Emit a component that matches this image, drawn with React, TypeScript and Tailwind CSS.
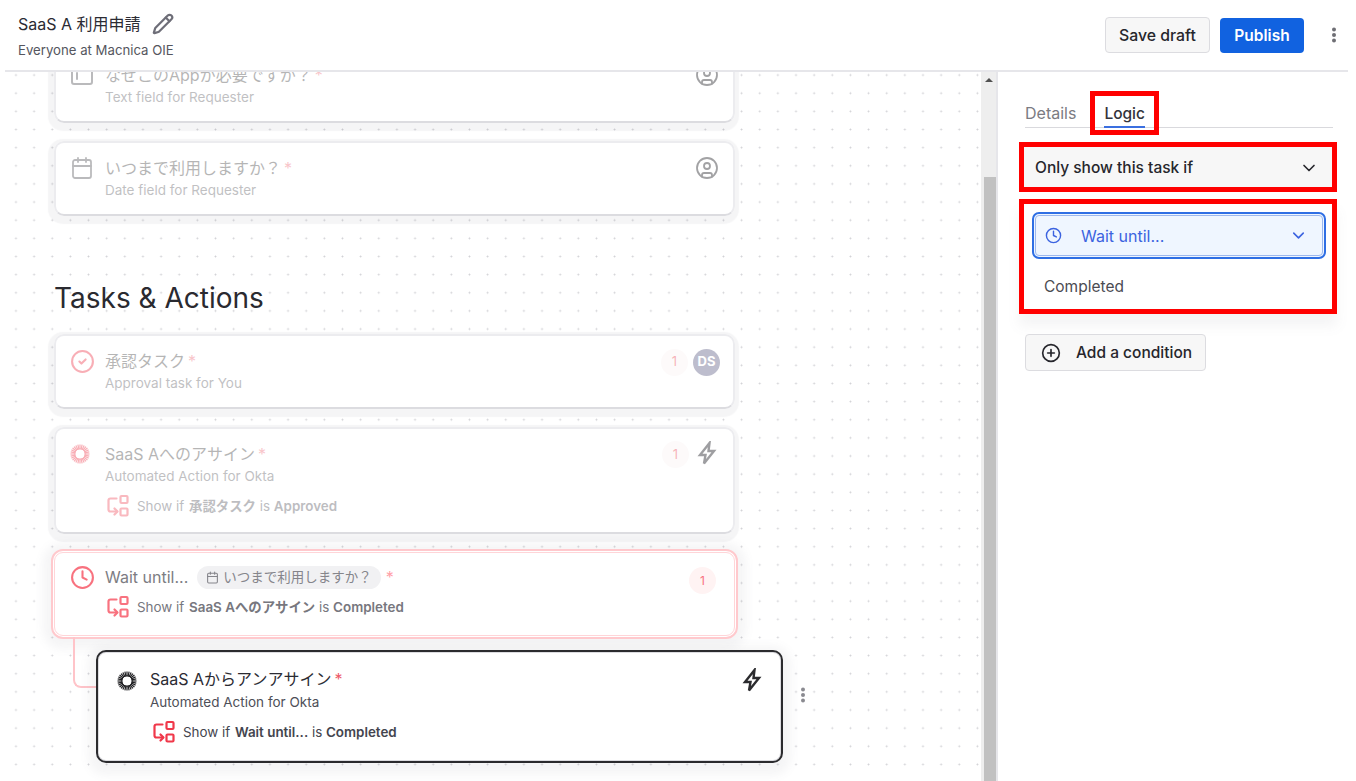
import { Calendar, ChevronDown, CircleCheck, CirclePlus, CircleUser, Clock, Pencil } from "lucide-react";

const font = "font-['Inter','Noto_Sans_CJK_JP',sans-serif]";

const Dots = ({ className }: { className?: string }) => (
  <svg viewBox="0 0 4 16" width="4" height="16" className={className} fill="currentColor">
    <circle cx="2" cy="2.4" r="2" />
    <circle cx="2" cy="8" r="2" />
    <circle cx="2" cy="13.6" r="2" />
  </svg>
);

const OktaIcon = ({ className }: { className?: string }) => {
  const rays = Array.from({ length: 28 }, (_, i) => (i * 360) / 28);
  return (
    <svg viewBox="0 0 20 20" width="20" height="20" className={className} stroke="currentColor" fill="none">
      <circle cx="10" cy="10" r="5.2" strokeWidth="1" />
      {rays.map((r) => (
        <line key={r} x1="10" y1="0.5" x2="10" y2="5.2" strokeWidth="1.2" transform={`rotate(${r} 10 10)`} />
      ))}
    </svg>
  );
};

const BoltIcon = ({ className }: { className?: string }) => (
  <svg viewBox="0 0 20 24" width="20" height="24" className={className} fill="none" stroke="currentColor" strokeWidth="2.4" strokeLinejoin="miter">
    <path d="M12.5 2 3 14H8.5L7 22.5 17 10H11.5Z" />
  </svg>
);

const LogicIcon = ({ className }: { className?: string }) => (
  <svg viewBox="0 0 22 24" width="22" height="24" className={className} fill="none" stroke="currentColor" strokeWidth="2.2" strokeLinecap="round" strokeLinejoin="round">
    <rect x="13.5" y="2" width="7" height="7" rx="1" />
    <rect x="13.5" y="14.5" width="7" height="7" rx="1" />
    <path d="M9.5 4.5H3.5a2 2 0 0 0-2 2v9a2 2 0 0 0 2 2H10" />
    <path d="M7.5 14.5 10.5 17.5 7.5 20.5" />
  </svg>
);

const TextFieldIcon = ({ className }: { className?: string }) => (
  <svg viewBox="0 0 24 24" width="24" height="24" className={className} fill="none" stroke="currentColor" strokeWidth="2" strokeLinecap="round">
    <rect x="2" y="3" width="20" height="18" rx="2" />
    <path d="M7 10v6" />
  </svg>
);

const Star = () => <span className="text-[#ed5a68] ml-[3px]">*</span>;

const Count = () => (
  <span className="w-[27px] h-[27px] rounded-full bg-[#fbf6f6] text-[13px] text-[#ed5a68] flex items-center justify-center">1</span>
);

const Card = ({ icon, title, sub, right, logic, height }: { icon: React.ReactNode; title: React.ReactNode; sub?: string; right?: React.ReactNode; logic?: React.ReactNode; height: string }) => (
  <div className="w-fit rounded-[10px] shadow-[-1px_3px_1px_5px_rgba(120,120,130,0.07)]">
    <div className={`w-[681px] ${height} bg-white rounded-[10px] border-2 border-[#ececef] border-b-[#dcdce0] flex pl-[14px] pr-[14px] pt-[13px]`}>
      <div className="w-[35px] shrink-0 opacity-40">{icon}</div>
      <div className="flex-1 min-w-0 opacity-35">
        <div className="text-[16px] leading-[24px] text-[#2f2f2f]">{title}</div>
        {sub && <div className="text-[13.5px] leading-[20px] text-[#4e4e54]">{sub}</div>}
        {logic}
      </div>
      <div className="opacity-45">{right}</div>
    </div>
  </div>
);

const Logic = ({ name, state, iconClass, textClass, top }: { name: string; state: string; iconClass: string; textClass: string; top: string }) => (
  <div className={`flex items-center gap-[8px] ${top} ml-[2px] text-[13.4px] leading-[24px] ${textClass}`}>
    <LogicIcon className={iconClass} />
    <span>Show if <b className="font-semibold ml-[1px]">{name}</b> is <b className="font-semibold">{state}</b></span>
  </div>
);

export default function App() {
  return (
    <div className={`w-[1356px] h-[781px] overflow-hidden bg-white flex flex-col ${font}`}>
      <header className="h-[72px] shrink-0 ml-[5px] mr-[8px] flex items-center border-b-2 border-[#e6e6ea] pl-[13px] pr-[12px]">
        <div className="flex-1">
          <div className="flex items-center gap-[11px] text-[16px] leading-[24px] text-[#2b2b33]">
            <span>SaaS A 利用申請</span>
            <Pencil size={22} strokeWidth={2.4} className="text-[#6e6e78]" />
          </div>
          <div className="text-[13.2px] leading-[18px] mt-[5px] text-[#55565e]">Everyone at Macnica OIE</div>
        </div>
        <button className="h-[36px] w-[105px] pt-[1px] rounded-[4px] border border-[#dcdce0] bg-[#f7f7f7] text-[15.8px] font-medium text-[#26262c] mr-[10px]">Save draft</button>
        <button className="h-[35px] w-[84px] pt-[1px] rounded-[4px] bg-[#1162e0] text-[15.5px] font-semibold text-white mr-[28px]">Publish</button>
        <Dots className="text-[#6e6e74]" />
      </header>
      <div className="flex-1 flex min-h-0">
        <main className="ml-[5px] w-[976px] shrink-0 overflow-hidden pl-[49px] bg-white bg-[radial-gradient(circle,#d0d0d4_0.8px,transparent_1.1px)] bg-[length:18.15px_18.15px] bg-[position:1.9px_-6px]">
          <div className="-mt-[24px] flex flex-col">
            <Card height="h-[75px]" icon={<TextFieldIcon className="text-[#55555a]" />} title={<>なぜこのAppが必要ですか？<Star /></>} sub="Text field for Requester" right={<CircleUser size={24} strokeWidth={1.8} className="text-[#333338]" />} />
            <div className="h-[18px]" />
            <Card height="h-[75px]" icon={<Calendar size={24} strokeWidth={1.8} className="text-[#55555a]" />} title={<>いつまで利用しますか？<Star /></>} sub="Date field for Requester" right={<CircleUser size={24} strokeWidth={1.8} className="text-[#333338]" />} />
            <h2 className="text-[28px] leading-[36px] text-[#2a2a30] mt-[64px] mb-[18px]">Tasks &amp; Actions</h2>
            <Card height="h-[75px]" icon={<CircleCheck size={25} strokeWidth={2} className="text-[#f0384a]" />} title={<>承認タスク<Star /></>} sub="Approval task for You" right={
              <div className="flex items-center gap-[5px] h-[26px] -mr-[1px]">
                <Count />
                <span className="w-[27px] h-[27px] rounded-full bg-[#6f6f92] text-white text-[13px] font-bold flex items-center justify-center">DS</span>
              </div>
            } />
            <div className="h-[18px]" />
            <Card height="h-[107px]" icon={<OktaIcon className="text-[#f0384a] mt-[2px]" />} title={<>SaaS Aへのアサイン<Star /></>} sub="Automated Action for Okta" logic={<Logic top="mt-[8px]" name="承認タスク" state="Approved" iconClass="text-[#f0384a]" textClass="text-[#44454e]" />} right={
              <div className="flex items-start gap-[8px]">
                <span className="block -mt-[1px]"><Count /></span>
                <BoltIcon className="text-[#2b2b30] -mt-[1px] mr-[2px]" />
              </div>
            } />
            <div className="h-[15px]" />
            <div className="w-[687px] -ml-[3px] h-[90px] rounded-[12px] border-2 border-[#ffc9cd] bg-white p-[1px] shadow-[0_2px_10px_8px_rgba(120,120,130,0.07)]">
              <div className="relative h-full rounded-[9px] border border-[#ffd5d8] flex pl-[15px] pr-[18px] pt-[12px]">
                <Clock size={25} strokeWidth={2} className="text-[#f8727f] mr-[10px]" />
                <div className="flex-1">
                  <div className="flex items-center text-[16px] leading-[24px] text-[#7d7d83]">
                    <span>Wait until...</span>
                    <span className="ml-[9px] h-[23px] px-[9px] rounded-full bg-[#f1f1f3] flex items-center gap-[4px] text-[13.5px] text-[#85858b]">
                      <Calendar size={13} strokeWidth={2} />いつまで利用しますか？
                    </span>
                    <span className="text-[#ffa0a8] ml-[5px]">*</span>
                  </div>
                  <Logic top="mt-[6px]" name="SaaS Aへのアサイン" state="Completed" iconClass="text-[#f8727f]" textClass="text-[#77777e]" />
                </div>
                <span className="w-[27px] h-[27px] rounded-full bg-[#fff3f3] text-[12px] text-[#f8727f] flex items-center justify-center mt-[2px]">1</span>
                <span className="absolute left-[18px] top-[84px] w-[26px] h-[51px] rounded-bl-[8px] border-l-2 border-b-2 border-[#ffc4c9]" />
              </div>
            </div>
            <div className="h-[11px]" />
            <div className="flex items-center ml-[42px]">
              <div className="relative z-10 w-[687px] h-[113px] shrink-0 rounded-[10px] border-2 border-[#2b2b2e] bg-white shadow-[inset_0_0_0_1px_#dcdce0,0_4px_10px_8px_rgba(120,120,130,0.07)] flex pl-[19px] pr-[19px] pt-[15px]">
                <OktaIcon className="text-[#1f1f22] mt-[4px] mr-[13px]" />
                <div className="flex-1">
                  <div className="text-[16px] leading-[24px] text-[#2b2b33]">SaaS Aからアンアサイン<Star /></div>
                  <div className="text-[13.5px] leading-[20px] text-[#4e4f58] mt-[1px]">Automated Action for Okta</div>
                  <Logic top="mt-[8px] ml-[3px]" name="Wait until..." state="Completed" iconClass="text-[#f0384a]" textClass="text-[#44454e]" />
                </div>
                <BoltIcon className="text-[#2b2b2e] mt-[1px]" />
              </div>
              <Dots className="text-[#8a8a90] ml-[18px] -mt-[24px]" />
            </div>
          </div>
        </main>
        <div className="w-[15px] shrink-0 bg-[#eeeeee] flex flex-col items-end">
          <span className="mt-[6px] mr-[3px] w-0 h-0 border-l-[4px] border-r-[4px] border-b-[4px] border-l-transparent border-r-transparent border-b-[#505050]" />
          <div className="w-[12px] mt-[95px] flex-1 bg-[#c1c1c1]" />
        </div>
        <aside className="flex-1 border-l-2 border-[#e6e6ea] pl-[27px] pr-[22px] pt-[29px]">
          <nav className="flex gap-[28px] border-b border-[#d9d9dd] h-[27px] w-[308px] text-[16px] leading-[24px]">
            <span className="text-[#7b7b82]">Details</span>
            <span className="relative h-[27px] pt-[1px] text-[#33333a] font-medium text-[15.5px] border-b-2 border-[#3a6fe0]">
              Logic
              <span className="absolute -left-[14px] -right-[14px] -top-[10px] h-[44px] border-[5px] border-[#ff0000]" />
            </span>
          </nav>
          <div className="-ml-[6px] mt-[14px] w-[318px] h-[50px] border-[5px] border-[#ff0000] bg-[#f7f7f7] flex items-center justify-between pt-[1px] pl-[11px] pr-[13px] text-[15.5px] font-medium text-[#26262c]">
            Only show this task if
            <ChevronDown size={20} strokeWidth={2} />
          </div>
          <div className="-ml-[6px] mt-[7px] w-[318px] h-[115px] border-[5px] border-[#ff0000] bg-white pt-[8px] pl-[8px] shadow-[0_12px_12px_rgba(120,120,130,0.08)]">
            <div className="h-[47px] w-[294px] rounded-[7px] border-2 border-[#2f6fe4] bg-[#eff6ff] p-[1px]">
              <div className="h-full rounded-[4px] border border-[#9db8ee] flex items-center pl-[9px] pr-[14px] text-[16px] text-[#3b63e0]">
                <Clock size={17} strokeWidth={2} className="mr-[19px]" />
                <span className="flex-1">Wait until...</span>
                <ChevronDown size={19} strokeWidth={2} />
              </div>
            </div>
            <div className="text-[15.5px] leading-[20px] text-[#4b4b52] pl-[12px] mt-[18px]">Completed</div>
          </div>
          <button className="mt-[20px] h-[37px] w-[181px] rounded-[4px] border border-[#dcdce0] bg-[#f7f7f7] flex items-center pl-[15px] gap-[15px] text-[15.5px] font-medium text-[#26262c]">
            <CirclePlus size={20} strokeWidth={2} />
            Add a condition
          </button>
        </aside>
      </div>
    </div>
  );
}
